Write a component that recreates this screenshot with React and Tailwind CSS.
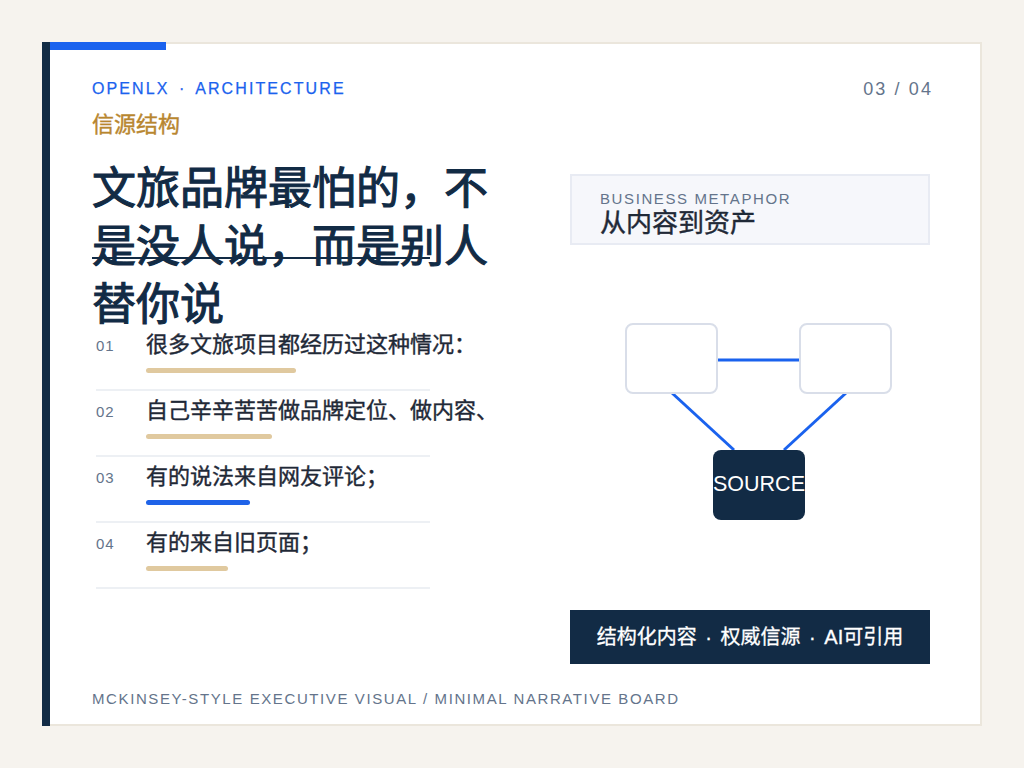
const font = "[font-family:'Liberation_Sans','Noto_Sans_CJK_SC',sans-serif]";

const items = [
  { no: "01", text: "很多文旅项目都经历过这种情况：", bar: "w-[150px] bg-[#e0c99f]" },
  { no: "02", text: "自己辛辛苦苦做品牌定位、做内容、", bar: "w-[126px] bg-[#e0c99f]" },
  { no: "03", text: "有的说法来自网友评论；", bar: "w-[104px] bg-[#1f63e8]" },
  { no: "04", text: "有的来自旧页面；", bar: "w-[82px] bg-[#e0c99f]" },
];

const Diagram = () => (
  <div className="relative h-[197px] w-[268px]">
    <svg className="absolute inset-0" width="268" height="197" fill="none" stroke="#1a62ee" strokeWidth="3">
      <path d="M92 37H175" />
      <path d="M47 70L109 127" />
      <path d="M221 70L159 127" />
    </svg>
    <div className="absolute left-0 top-0 h-[71px] w-[93px] rounded-lg border-2 border-[#d9dee9] bg-white" />
    <div className="absolute left-[174px] top-0 h-[71px] w-[93px] rounded-lg border-2 border-[#d9dee9] bg-white" />
    <div className="absolute left-[88px] top-[127px] flex h-[70px] w-[92px] items-center justify-center rounded-lg bg-[#122b45] pb-px text-[21.5px] text-white">
      SOURCE
    </div>
  </div>
);

export default function App() {
  return (
    <div className={`h-[768px] w-[1024px] overflow-hidden bg-[#f6f3ee] p-[42px] ${font}`}>
      <div className="relative flex h-[684px] w-[940px] flex-col border-2 border-l-0 border-[#ebe6dc] bg-white pl-[42px] pr-[50px] pt-[35px]">
        <div className="absolute left-0 -top-[2px] h-[684px] w-2 bg-[#122b45]" />
        <div className="absolute left-2 -top-[2px] h-2 w-[116px] bg-[#1a62ee]" />

        <div className="-mr-[3px] ml-2 flex items-center justify-between">
          <span className="text-[16px] leading-5 tracking-[2.1px] text-[#1a62ee] [-webkit-text-stroke:0.25px_#1a62ee] [word-spacing:3px]">OPENLX · ARCHITECTURE</span>
          <span className="text-[18px] leading-5 tracking-[2.1px] text-[#64748b]">03 / 04</span>
        </div>
        <div className="ml-2 mt-[10px] text-[22px] leading-[32px] text-[#b8862f] [-webkit-text-stroke:0.4px_#b8862f]">信源结构</div>

        <div className="ml-2 mt-[19px] flex flex-1 justify-between">
          <div className="relative w-[396px]">
            <h1 className="text-[44px] leading-[58px] text-[#122b45] [-webkit-text-stroke:1.1px_#122b45]">文旅品牌最怕的，不是没人说，而是别人替你说</h1>
            <div className="absolute left-0 top-[97px] h-[2px] w-[338px] bg-[#122b45]" />
            <div className="-mt-[9px] ml-1 w-[334px]">
              {items.map((item) => (
                <div key={item.no} className="flex h-[66px] border-b-2 border-[#edf0f4] pt-[5px]">
                  <span className="w-[50px] shrink-0 pt-[6px] text-[15px] leading-5 tracking-[1px] text-[#64748b]">{item.no}</span>
                  <div>
                    <div className="whitespace-nowrap text-[22px] leading-[30px] text-[#1f2937] [-webkit-text-stroke:0.4px_#1f2937]">{item.text}</div>
                    <div className={`mt-2 h-[5px] rounded-full ${item.bar}`} />
                  </div>
                </div>
              ))}
            </div>
          </div>

          <div className="flex w-[360px] flex-col items-center pt-[14px]">
            <div className="h-[71px] w-full border-2 border-[#e8ebf3] bg-[#f6f7fb] pl-[28px] pt-[14px]">
              <div className="text-[15px] leading-[18px] tracking-[1.6px] text-[#64748b]">BUSINESS METAPHOR</div>
              <div className="text-[26px] leading-[30px] text-[#1f2937] [-webkit-text-stroke:0.4px_#1f2937]">从内容到资产</div>
            </div>
            <div className="ml-[18px] mt-[78px]">
              <Diagram />
            </div>
            <div className="mt-[90px] flex h-[54px] w-full items-center justify-center bg-[#122b45] text-[20px] text-white [-webkit-text-stroke:0.3px_#ffffff] [word-spacing:3px]">
              结构化内容 · 权威信源 · AI可引用
            </div>
          </div>
        </div>

        <div className="ml-2 pb-[15px] pt-[24px] text-[15px] leading-5 tracking-[1.6px] text-[#64748b]">
          MCKINSEY-STYLE EXECUTIVE VISUAL / MINIMAL NARRATIVE BOARD
        </div>
      </div>
    </div>
  );
}
